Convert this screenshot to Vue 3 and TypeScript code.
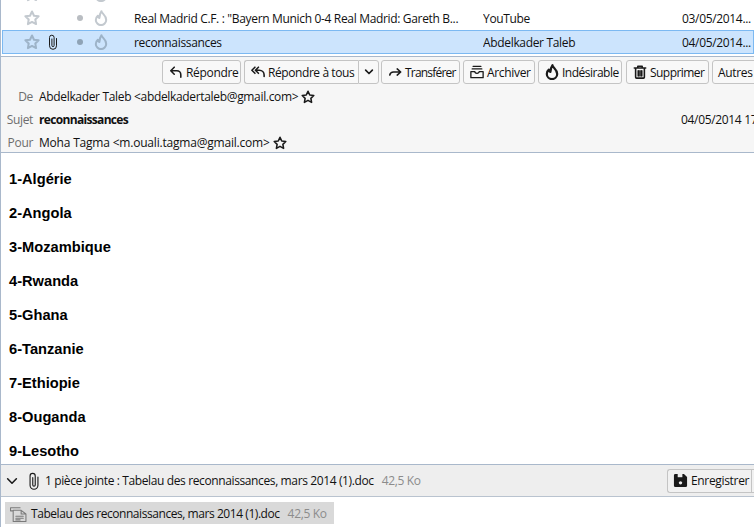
<script setup lang="ts">
interface MailRow {
  subject: string
  sender: string
  date: string
  clip?: boolean
  selected?: boolean
}

const rows: MailRow[] = [
  { subject: 'Real Madrid C.F. : "Bayern Munich 0-4 Real Madrid: Gareth B...', sender: 'YouTube', date: '03/05/2014...' },
  { subject: 'reconnaissances', sender: 'Abdelkader Taleb', date: '04/05/2014...', clip: true, selected: true },
]

const countries = ['1-Algérie', '2-Angola', '3-Mozambique', '4-Rwanda', '5-Ghana', '6-Tanzanie', '7-Ethiopie', '8-Ouganda', '9-Lesotho']

const star = 'M8 1.500l2 4.200 4.600.6-3.300 3.200.8 4.600L8 11.900l-4.100 2.200.8-4.600L1.400 6.300 6 5.700z'
const flame = 'M8.500 1.200c0 2.300 4.700 3.800 4.700 8.700a5.200 5.200 0 0 1-10.400 0c0-1.800.8-3.200 2-4.200 0 1.200.5 2 1.600 2.300C6.600 5.600 7 3.200 8.500 1.200z'
const clip = 'M11.500 4.500v7.300a3.500 3.500 0 0 1-7 0V3.500a2.300 2.300 0 0 1 4.600 0v8a1.100 1.100 0 0 1-2.200 0V5'
</script>

<template>
  <div class="window">
    <div class="thread-list">
      <div class="mail-row ghost">
        <span />
        <svg class="ico" viewBox="0 0 16 16"><path :d="star" class="pale" /></svg>
        <span /><i class="dot" />
        <svg class="ico flame-col" viewBox="0 0 16 16"><path :d="flame" class="pale" /></svg>
      </div>
      <div v-for="row in rows" :key="row.subject" :class="['mail-row', { selected: row.selected }]">
        <span />
        <svg class="ico" viewBox="0 0 16 16"><path :d="star" class="pale" /></svg>
        <svg v-if="row.clip" class="ico" viewBox="0 0 16 16"><path :d="clip" class="ink thin" /></svg>
        <span v-else />
        <i class="dot" />
        <svg class="ico flame-col" viewBox="0 0 16 16"><path :d="flame" class="pale" /></svg>
        <span />
        <span class="cell">{{ row.subject }}</span>
        <span class="cell">{{ row.sender }}</span>
        <span class="cell">{{ row.date }}</span>
      </div>
    </div>

    <header class="msg-head">
      <div class="toolbar">
        <button class="btn w-reply">
          <svg viewBox="0 0 16 16"><path d="M6 2.500 2 6.500l4 4M2.500 6.500H9a4.500 4.500 0 0 1 4.500 4.500v3" class="ink thick" /></svg>
          Répondre
        </button>
        <div class="split">
          <button class="btn part">
            <svg viewBox="0 0 16 16"><path d="M4.500 2.500 1 6l3.500 3.500M8.500 2.500 5 6l3.500 3.500M5.500 6h4a5.500 5.500 0 0 1 5.500 5.500V13" class="ink thick" /></svg>
            Répondre à tous
          </button>
          <button class="btn caret">
            <svg viewBox="0 0 16 16"><path d="M3.500 5.500 8 10l4.500-4.500" class="ink heavy" /></svg>
          </button>
        </div>
        <button class="btn w-forward">
          <svg viewBox="0 0 16 16"><path d="M10.500 4.500 14.500 8l-4 3.500M13.500 8H6.500A4.500 4.500 0 0 0 2 11.500" class="ink thick" /></svg>
          Transférer
        </button>
        <button class="btn w-archive">
          <svg viewBox="0 0 16 16"><path d="M3.500 1.500h9M2.500 4.500h11M1 7.500h4.500a2.500 2 0 0 0 5 0H15v7H1z" class="ink med" /></svg>
          Archiver
        </button>
        <button class="btn w-junk">
          <svg class="tall" viewBox="0 0 16 16"><path :d="flame" class="ink heavy" /></svg>
          Indésirable
        </button>
        <button class="btn w-delete">
          <svg viewBox="0 0 16 16"><path d="M1.500 3.500h13M5.500 3.500V1.500h5v2M3 3.500h10v10.500a1 1 0 0 1-1 1H4a1 1 0 0 1-1-1zM6 6.500v6M8 6.500v6M10 6.500v6" class="ink thick" /></svg>
          Supprimer
        </button>
        <button class="btn more">Autres</button>
      </div>

      <div class="field from">
        <span class="label">De</span>
        <span>Abdelkader Taleb &lt;abdelkadertaleb@gmail.com&gt;</span>
        <svg class="ico-small" viewBox="0 0 16 16"><path :d="star" class="ink thick" /></svg>
      </div>
      <div class="field subject">
        <span class="label">Sujet</span>
        <strong>reconnaissances</strong>
        <time>04/05/2014 17:32</time>
      </div>
      <div class="field to">
        <span class="label">Pour</span>
        <span class="to-value">Moha Tagma &lt;m.ouali.tagma@gmail.com&gt;</span>
        <svg class="ico-small" viewBox="0 0 16 16"><path :d="star" class="ink thick" /></svg>
      </div>
    </header>

    <main class="msg-body">
      <p v-for="name in countries" :key="name">{{ name }}</p>
    </main>

    <div class="attach-bar">
      <svg class="chevron" viewBox="0 0 16 16"><path d="M3 5.500 8 10.500 13 5.500" class="ink thick" /></svg>
      <svg class="bar-clip" viewBox="0 0 16 16"><path :d="clip" class="ink thin" /></svg>
      <span class="bar-text">1 pièce jointe : Tabelau des reconnaissances, mars 2014 (1).doc</span>
      <span class="size">42,5 Ko</span>
      <div class="save">
        <svg viewBox="0 0 16 16">
          <path class="solid" d="M2.500 1h9.200L15 4.300v9.200a1.500 1.500 0 0 1-1.500 1.500h-11A1.500 1.500 0 0 1 1 13.500v-11A1.500 1.500 0 0 1 2.500 1z" />
          <path class="cut" d="M5 1h5v3.500H5z" />
          <circle cx="8" cy="10.500" r="1.800" class="cut" />
        </svg>
        <span>Enregistrer</span>
      </div>
    </div>

    <div class="attach-list">
      <div class="attach-item">
        <svg viewBox="0 0 16 16"><path d="M.5 2.500h9M.5 2.500v3h2.500M3 5h7.500l4.500 3.500v7H3zM10.500 5v3.500H15M5.500 10.500h7M5.500 12.500h7M5.500 14h4" class="doc" /></svg>
        <span class="name">Tabelau des reconnaissances, mars 2014 (1).doc</span>
        <span class="size">42,5 Ko</span>
      </div>
    </div>
  </div>
</template>

<style scoped>
.window {
  width: 754px;
  height: 527px;
  display: flex;
  flex-direction: column;
  overflow: hidden;
  background: #fff;
  font-family: "Open Sans", "Liberation Sans", sans-serif;
  font-size: 12px;
  letter-spacing: -0.33px;
  color: #111;
  box-sizing: border-box;
  border-left: 1px solid #a9b8cb;
}

svg path { fill: none; stroke-linecap: round; stroke-linejoin: round; }
svg path.solid { fill: #1a1a1a; stroke: none; }
svg .cut { fill: #eee; stroke: none; }

.thread-list {
  height: 56px;
  flex-shrink: 0;
  display: flex;
  flex-direction: column;
  justify-content: flex-end;
  padding: 0 0 2px 1px;
  box-sizing: border-box;
  overflow: hidden;
}

.mail-row {
  height: 24px;
  flex-shrink: 0;
  box-sizing: border-box;
  border: 1px solid transparent;
  display: grid;
  grid-template-columns: 19px 20px 22px 32px 12px 26px 349px 199px 1fr;
  align-items: center;
}
.mail-row.selected { background: #cce4fd; border-color: #7cb9f2; }

.ico { width: 16px; height: 16px; justify-self: center; }
.flame-col { margin-left: -2px; }
.pale { stroke: #c3c9cf; stroke-width: 2; }
.selected .pale { stroke: #9db3c8; }
.ink { stroke: #1a1a1a; stroke-width: 1; }
.heavy { stroke-width: 2.2; }
.thick { stroke-width: 1.8; }
.med { stroke-width: 1.5; }
.thin { stroke-width: 1; }

.dot { width: 6px; height: 6px; border-radius: 50%; background: #b9bdc2; justify-self: center; }
.selected .dot { background: #8fa3b6; }
.cell { white-space: nowrap; overflow: hidden; }

.msg-head {
  flex-shrink: 0;
  height: 97px;
  box-sizing: border-box;
  background: #f6f6f6;
  border-top: 1px solid #a9b8cb;
  border-bottom: 1px solid #a9b8cb;
  padding-top: 3px;
  overflow: hidden;
}

.toolbar {
  display: flex;
  gap: 3px;
  height: 24px;
  padding-left: 161px;
  margin-bottom: 1px;
}

.btn {
  flex-shrink: 0;
  height: 24px;
  display: flex;
  align-items: center;
  gap: 3px;
  padding: 0 0 0 6px;
  box-sizing: border-box;
  background: #f8f8f8;
  border: 1px solid #c4c4c4;
  border-radius: 3px;
  font: inherit;
  letter-spacing: inherit;
  color: inherit;
  white-space: nowrap;
}
.btn svg { width: 14px; height: 14px; flex-shrink: 0; }
.btn svg.tall { width: 16px; height: 16px; margin: 0 -1px; }
.w-reply { width: 79px; }
.split { display: flex; flex-shrink: 0; margin-right: -1px; }
.part { width: 114px; border-radius: 3px 0 0 3px; border-right: none; letter-spacing: -0.42px; }
.caret { width: 21px; padding: 0; border-radius: 0 3px 3px 0; justify-content: center; }
.caret svg { width: 12px; height: 12px; }
.w-forward { width: 79px; letter-spacing: -0.8px; }
.w-archive { width: 72px; }
.w-junk { width: 84px; letter-spacing: -0.5px; }
.w-delete { width: 83px; margin-left: 1px; letter-spacing: -0.55px; }
.more { padding-left: 5px; width: 60px; }

.field {
  display: flex;
  align-items: center;
  height: 23px;
  white-space: nowrap;
}
.label { width: 32px; margin-right: 6px; text-align: right; color: #6d6d6d; }
.ico-small { width: 14px; height: 14px; margin-left: 3px; }
.subject strong { font-weight: 700; letter-spacing: -0.67px; }
.subject time { margin-left: auto; width: 73px; flex-shrink: 0; overflow: hidden; }
.to-value { letter-spacing: -0.2px; }

.msg-body {
  flex: 1;
  min-height: 0;
  overflow: hidden;
  padding: 18px 0 0 8px;
  font-family: "Liberation Sans", Arial, sans-serif;
  font-size: 14.67px;
  font-weight: 700;
  letter-spacing: 0;
  color: #000;
}
.msg-body p { margin: 0 0 18px; line-height: 16px; }

.attach-bar {
  flex-shrink: 0;
  height: 33px;
  box-sizing: border-box;
  background: #eee;
  border-top: 1px solid #a9b8cb;
  border-bottom: 1px solid #b9c3cf;
  display: flex;
  align-items: center;
  overflow: hidden;
  white-space: nowrap;
}
.chevron { width: 14px; height: 14px; margin-left: 4px; }
.bar-clip { width: 18px; height: 18px; margin: 0 2px 0 6px; }
.bar-text { margin-right: 8px; letter-spacing: -0.38px; }
.size { color: #8c8c8c; }

.save {
  margin-left: auto;
  width: 87px;
  height: 24px;
  flex-shrink: 0;
  box-sizing: border-box;
  display: flex;
  align-items: center;
  gap: 3px;
  padding-left: 5px;
  background: #f1f1f1;
  border: 1px solid #c4c4c4;
  border-right: none;
  border-radius: 3px 0 0 3px;
}
.save svg { width: 15px; height: 15px; flex-shrink: 0; }
.save span { border-right: 1px solid #c4c4c4; height: 22px; line-height: 22px; padding-right: 2px; }

.attach-list {
  flex-shrink: 0;
  height: 30px;
  padding: 5px 0 0 4px;
  box-sizing: border-box;
}
.attach-item {
  width: 329px;
  height: 22px;
  box-sizing: border-box;
  background: #d9d9d9;
  display: flex;
  align-items: center;
  gap: 4px;
  padding-left: 5px;
  white-space: nowrap;
}
.attach-item svg { width: 17px; height: 17px; flex-shrink: 0; }
.doc { stroke: #7a7a7a; stroke-width: 1; }
.name { margin-right: 4px; letter-spacing: -0.44px; }
</style>

<style>
html, body { margin: 0; background: #fff; }
</style>
